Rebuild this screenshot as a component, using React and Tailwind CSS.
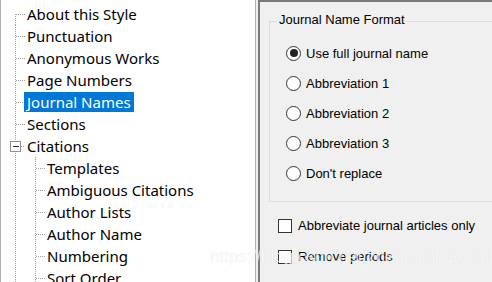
import React from "react";

const DOT = "#a0a0a0";

function Connector({ level, first, minus }) {
  const w = level === 1 ? 24 : 44;
  return (
    <svg width={w} height="22" className="shrink-0 block" shapeRendering="crispEdges">
      <line x1="14.5" x2="14.5" y1={first ? 11 : 0} y2={22} stroke={DOT} strokeDasharray="1 1" />
      {level === 1 && (
        <line x1={minus ? 20 : 15} x2="24" y1="11.5" y2="11.5" stroke={DOT} strokeDasharray="1 1" />
      )}
      {level === 2 && (
        <>
          <line x1="34.5" x2="34.5" y1="0" y2="22" stroke={DOT} strokeDasharray="1 1" />
          <line x1="35" x2="44" y1="11.5" y2="11.5" stroke={DOT} strokeDasharray="1 1" />
        </>
      )}
      {minus && (
        <>
          <rect x="9.5" y="6.5" width="10" height="10" fill="#fff" stroke="#919191" />
          <line x1="11.5" x2="18" y1="11.5" y2="11.5" stroke="#333" />
          <line x1="34.5" x2="34.5" y1="21" y2="22" stroke={DOT} />
        </>
      )}
    </svg>
  );
}

const items = [
  { t: "About this Style", l: 1, first: true },
  { t: "Punctuation", l: 1 },
  { t: "Anonymous Works", l: 1 },
  { t: "Page Numbers", l: 1 },
  { t: "Journal Names", l: 1, sel: true },
  { t: "Sections", l: 1 },
  { t: "Citations", l: 1, minus: true },
  { t: "Templates", l: 2 },
  { t: "Ambiguous Citations", l: 2 },
  { t: "Author Lists", l: 2 },
  { t: "Author Name", l: 2 },
  { t: "Numbering", l: 2 },
  { t: "Sort Order", l: 2 },
];

function Radio({ checked, label }) {
  return (
    <div className="flex items-center h-[30px]">
      <span className="w-[15px] h-[15px] rounded-full border border-[#333] bg-white flex items-center justify-center shrink-0">
        {checked && <span className="w-[8px] h-[8px] rounded-full bg-[#222]" />}
      </span>
      <span className="ml-[5px] text-[13px] text-black leading-none">{label}</span>
    </div>
  );
}

function Check({ label }) {
  return (
    <div className="flex items-center h-[31px]">
      <span className="w-[14px] h-[14px] border border-[#333] bg-white shrink-0" />
      <span className="ml-[6px] text-[13px] text-black leading-none">{label}</span>
    </div>
  );
}

export default function App() {
  return (
    <div className="relative w-[492px] h-[282px] overflow-hidden bg-[#f0f0f0] flex" style={{ fontFamily: '"Liberation Sans", Arial, sans-serif' }}>
      <div className="w-[256px] h-full bg-white border-l border-r border-[#b0b0b0] shrink-0 pt-[3px] overflow-hidden" style={{ fontFamily: '"Noto Sans", sans-serif' }}>
        {items.map((it) => (
          <div key={it.t} className="flex items-center h-[22px]">
            <Connector level={it.l} first={it.first} minus={it.minus} />
            <span
              className={
                "ml-[-1px] px-[3px] h-[20px] flex items-center text-[15px] leading-none whitespace-nowrap " +
                (it.sel ? "bg-[#0078d7] text-white" : "text-black")
              }
            >
              {it.t}
            </span>
          </div>
        ))}
      </div>
      <div className="ml-[2px] flex-1 h-full border-l-2 border-t-2 border-[#7a7a7a] bg-[#f0f0f0] pl-[9px] pt-[19px]">
        <div className="relative border border-[#dcdcdc] border-r-0 h-[181px] pl-[16px] pt-[16px]">
          <span className="absolute left-[7px] top-[-9px] bg-[#f0f0f0] px-[2px] text-[13px] leading-none text-black">
            Journal Name Format
          </span>
          <Radio checked label="Use full journal name" />
          <Radio label="Abbreviation 1" />
          <Radio label="Abbreviation 2" />
          <Radio label="Abbreviation 3" />
          <Radio label="Don't replace" />
        </div>
        <div className="pl-[9px] pt-[8px]">
          <Check label="Abbreviate journal articles only" />
          <Check label="Remove periods" />
        </div>
      </div>
      <div
        className="absolute left-[210px] top-[248px] text-[17px] leading-none text-white/75 whitespace-nowrap pointer-events-none"
        style={{ fontFamily: '"Liberation Sans", Arial, sans-serif', textShadow: "0 0 1px rgba(0,0,0,0.1)" }}
      >
        https://blog.csdn.net/zhebushibiaoshifu
      </div>
    </div>
  );
}
